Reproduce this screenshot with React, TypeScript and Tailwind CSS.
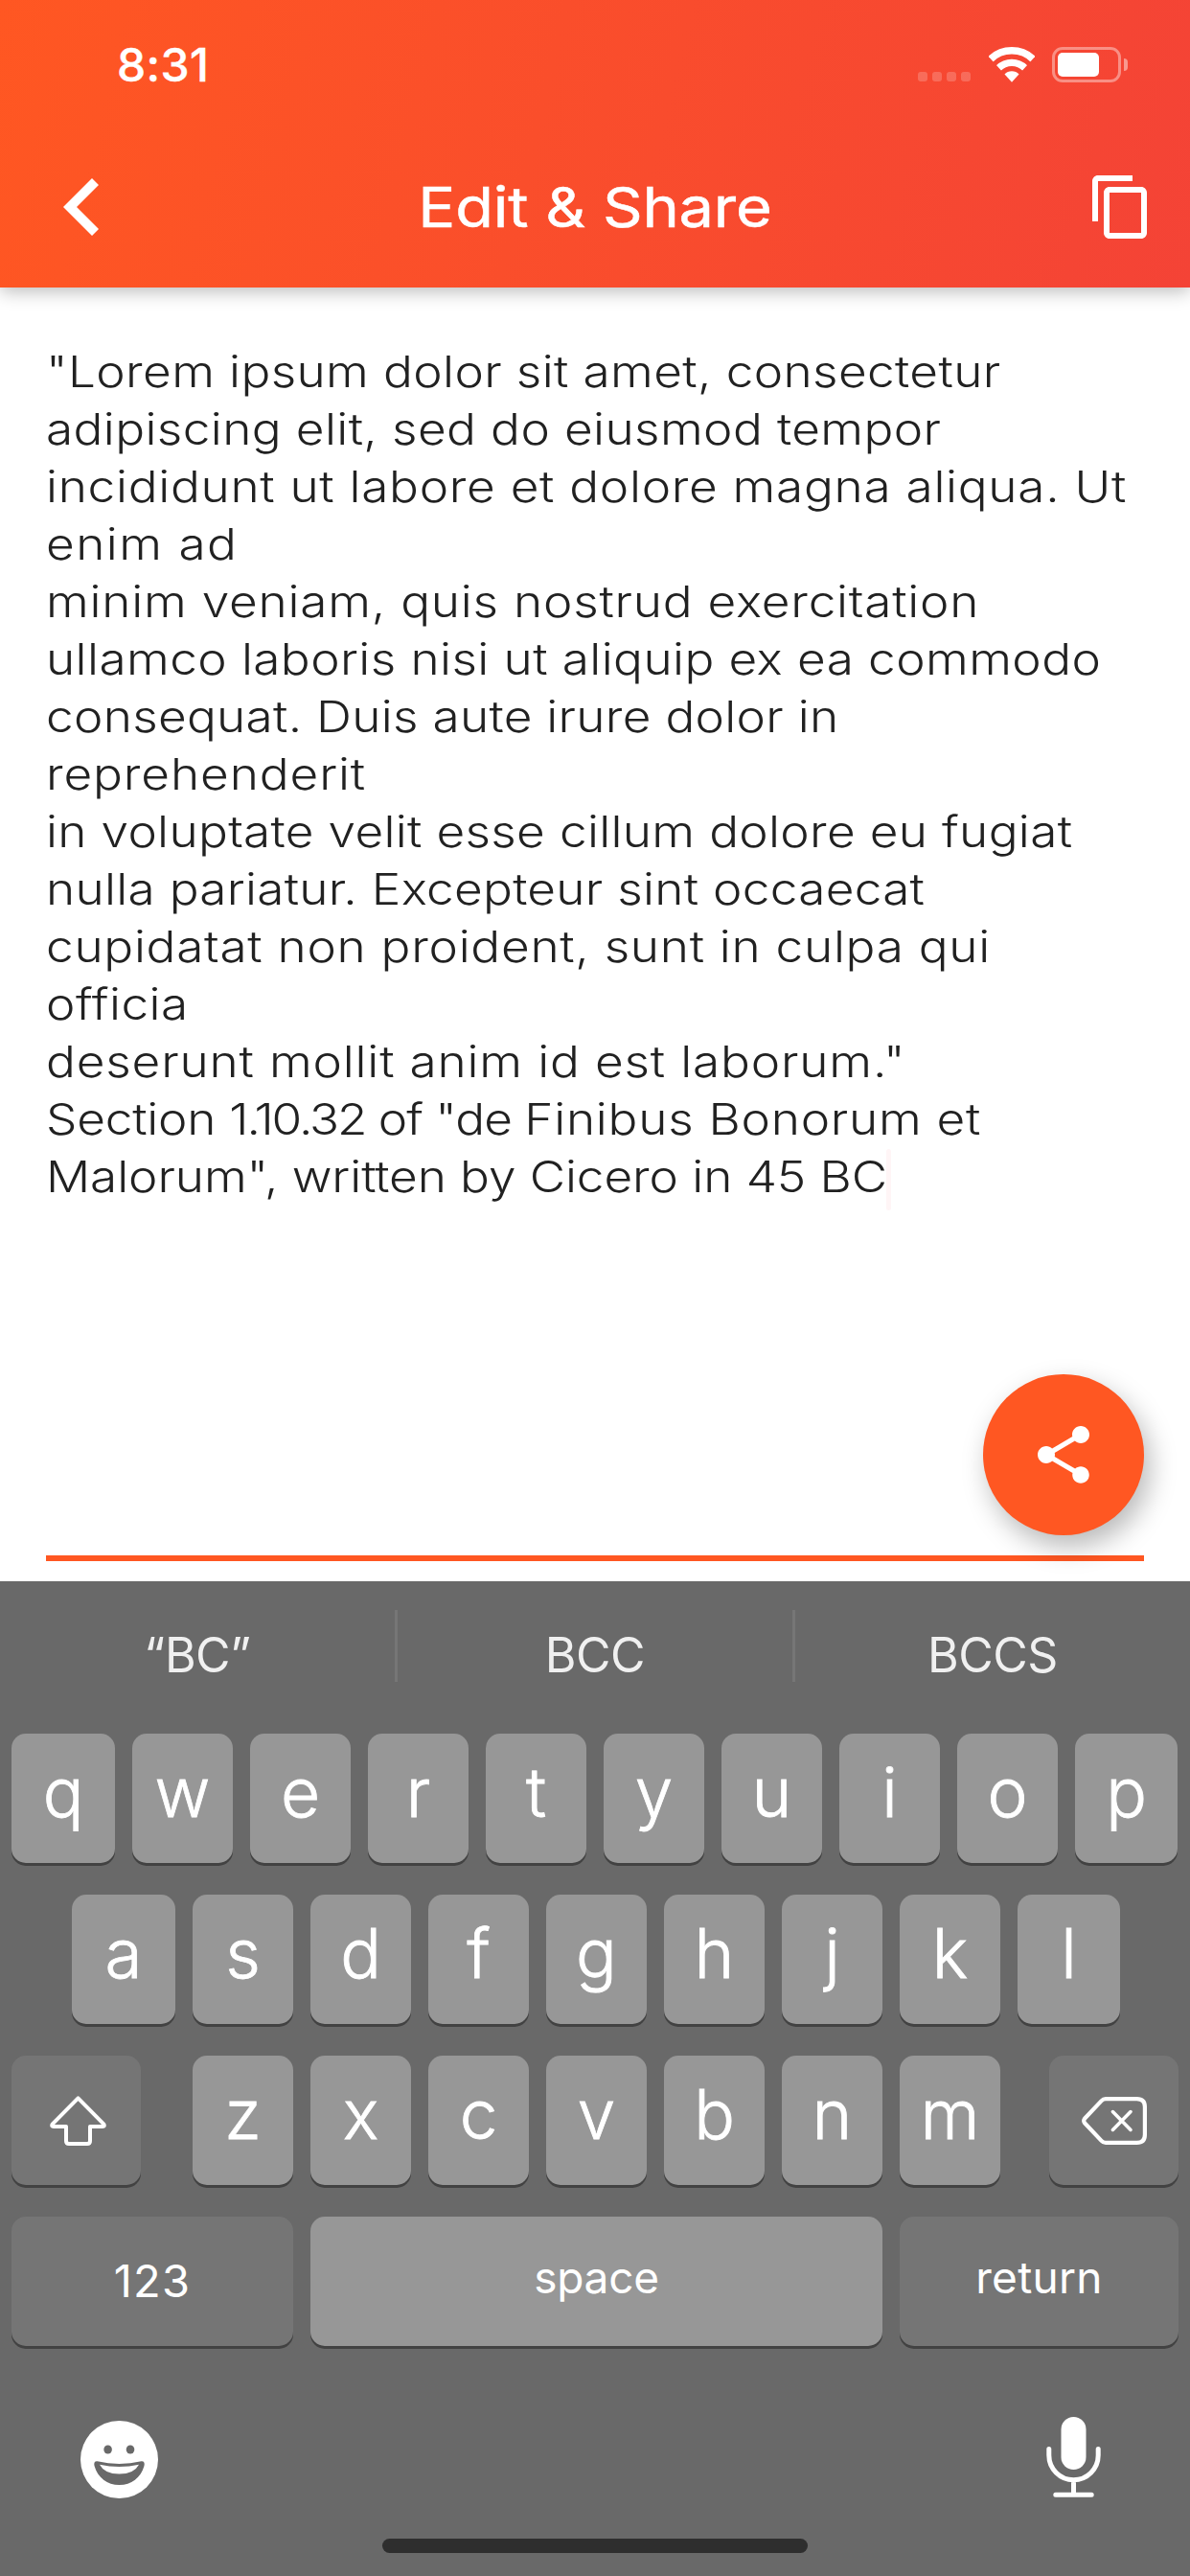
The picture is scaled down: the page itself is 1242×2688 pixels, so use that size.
import type { ReactNode } from "react";

const LINES: { text: ReactNode; tracking: string }[] = [
  { text: '"Lorem ipsum dolor sit amet, consectetur', tracking: "tracking-[0.33px]" },
  { text: "adipiscing elit, sed do eiusmod tempor", tracking: "tracking-[0.34px]" },
  { text: "incididunt ut labore et dolore magna aliqua. Ut", tracking: "tracking-[0.62px]" },
  { text: "enim ad", tracking: "tracking-[1.28px]" },
  { text: "minim veniam, quis nostrud exercitation", tracking: "tracking-[0.68px]" },
  { text: "ullamco laboris nisi ut aliquip ex ea commodo", tracking: "tracking-[0.36px]" },
  { text: "consequat. Duis aute irure dolor in", tracking: "tracking-[0.25px]" },
  { text: "reprehenderit", tracking: "tracking-[0.78px]" },
  { text: "in voluptate velit esse cillum dolore eu fugiat", tracking: "tracking-[0.28px]" },
  { text: "nulla pariatur. Excepteur sint occaecat", tracking: "tracking-[0.25px]" },
  { text: "cupidatat non proident, sunt in culpa qui", tracking: "tracking-[0.63px]" },
  { text: "officia", tracking: "tracking-[0.47px]" },
  { text: 'deserunt mollit anim id est laborum."', tracking: "tracking-[0.73px]" },
  {
    text: (
      <>
        Section <span className="tracking-[-1.8px]">1.10.32</span>
        <span className="tracking-[-0.9px]"> of "de </span>
        <span className="tracking-[0.65px]">Finibus Bonorum et</span>
      </>
    ),
    tracking: "tracking-[-0.2px]",
  },
  { text: 'Malorum", written by Cicero in 45 BC', tracking: "tracking-[-0.07px]" },
];

const KEY =
  "flex h-[135px] shrink-0 items-center justify-center rounded-[15px] shadow-[0_3px_0_#424242]";
const LIGHT = "bg-[#979797]";
const DARK = "bg-[#757575]";

function LetterKey({ char, width = "w-[105px]" }: { char: string; width?: string }) {
  return (
    <div
      className={`${KEY} ${LIGHT} ${width} pb-[12px] text-[71px] leading-none font-light [-webkit-text-stroke:0.8px_white]`}
    >
      {char}
    </div>
  );
}

function WifiIcon() {
  return (
    <svg width="48" height="37" viewBox="0 0 48 37" fill="none">
      <clipPath id="wifi-wedge">
        <path d="M24 36.8L-12 -3H60Z" />
      </clipPath>
      <g clipPath="url(#wifi-wedge)">
        <circle cx="24" cy="36" r="10.7" fill="white" />
        <circle cx="24" cy="36" r="19.6" stroke="white" strokeWidth="7.2" />
        <circle cx="24" cy="36" r="32.2" stroke="white" strokeWidth="7.6" />
      </g>
    </svg>
  );
}

function StatusBar() {
  return (
    <div className="flex h-[135px] items-center justify-between pr-[65px] pl-[122px]">
      <span className="text-[48px] leading-none font-medium tracking-[0.4px] [-webkit-text-stroke:0.4px_white]">8:31</span>
      <div className="flex items-center">
        <div className="mt-[25px] flex gap-[5px]">
          {[0, 1, 2, 3].map((dot) => (
            <span key={dot} className="size-[10px] rounded-[3px] bg-white/20" />
          ))}
        </div>
        <div className="ml-[19px]">
          <WifiIcon />
        </div>
        <div className="ml-[18px] h-[37px] w-[72px] rounded-[11px] border-[3px] border-white/40 p-[3px]">
          <div className="h-[25px] w-[43px] rounded-[5px] bg-white" />
        </div>
        <div className="ml-[3px] h-[13px] w-[4px] rounded-r-full bg-white/45" />
      </div>
    </div>
  );
}

function NavBar() {
  return (
    <div className="flex h-[165px] items-center pb-[3px]">
      <div className="flex w-[108px] justify-end pr-[5px]">
        <svg width="37" height="60" viewBox="0 0 37 60" fill="white">
          <path d="M0 30L30 0L37 7L14 30L37 53L30 60Z" />
        </svg>
      </div>
      <h1 className="flex-1 scale-x-[1.12] text-center text-[58px] leading-none font-normal tracking-[-0.2px] [-webkit-text-stroke:0.5px_white]">
        Edit &amp; Share
      </h1>
      <div className="w-[108px]">
        <svg width="72" height="72" viewBox="0 0 24 24" fill="white">
          <path d="M16 1H4c-1.1 0-2 .9-2 2v14h2V3h12V1zm3 4H8c-1.1 0-2 .9-2 2v14c0 1.1.9 2 2 2h11c1.1 0 2-.9 2-2V7c0-1.1-.9-2-2-2zm0 16H8V7h11v14z" />
        </svg>
      </div>
    </div>
  );
}

function ShareButton() {
  return (
    <button className="absolute top-[1134px] right-[48px] flex size-[168px] items-center justify-center rounded-full bg-[#ff5722] shadow-[6px_12px_28px_rgba(0,0,0,0.28)]">
      <svg width="72" height="72" viewBox="0 0 24 24" fill="white">
        <path d="M18 16.08c-.76 0-1.44.3-1.96.77L8.91 12.7c.05-.23.09-.46.09-.7s-.04-.47-.09-.7l7.05-4.11c.54.5 1.25.81 2.04.81 1.66 0 3-1.34 3-3s-1.34-3-3-3-3 1.34-3 3c0 .24.04.47.09.7L8.04 9.81C7.5 9.31 6.79 9 6 9c-1.66 0-3 1.34-3 3s1.34 3 3 3c.79 0 1.5-.31 2.04-.81l7.12 4.16c-.05.21-.08.43-.08.65 0 1.61 1.31 2.92 2.92 2.92s2.92-1.31 2.92-2.92-1.31-2.92-2.92-2.92z" />
      </svg>
    </button>
  );
}

function Editor() {
  return (
    <main className="relative flex h-[1350px] flex-col px-[48px] pt-[58px]">
      <div className="w-[1000px] origin-left scale-x-[1.14] text-[45px] leading-[60px] font-light text-[#212121]">
        {LINES.map(({ text, tracking }, i) => (
          <p key={i} className={`whitespace-nowrap ${tracking}`}>
            {text}
          </p>
        ))}
      </div>
      <div className="mt-auto mb-[21px] h-[6px] bg-[#ff5722]" />
      <div className="absolute top-[899px] left-[925px] h-[64px] w-[5px] rounded-full bg-[#fff5f6]" />
      <ShareButton />
    </main>
  );
}

function Suggestions() {
  const cell = "flex flex-1 items-center justify-center pt-[19px]";
  return (
    <div className="flex h-[105px] pt-[30px] text-[50px] leading-none tracking-[-0.5px] text-[#f0f0f0]">
      <div className={cell}>“BC”</div>
      <div className="w-[3px] bg-[#767676]" />
      <div className={cell}>BCC</div>
      <div className="w-[3px] bg-[#767676]" />
      <div className={cell}>BCCS</div>
    </div>
  );
}

function Keyboard() {
  return (
    <section className="flex h-[1038px] flex-col bg-[#696969] text-white">
      <Suggestions />
      <div className="mt-[54px] flex flex-col gap-[33px]">
        <div className="flex gap-[18px] pl-[12px]">
          <LetterKey char="q" width="w-[108px]" />
          {[..."wertyuio"].map((c) => (
            <LetterKey key={c} char={c} />
          ))}
          <LetterKey char="p" width="w-[107px]" />
        </div>
        <div className="flex gap-[18px] pl-[75px]">
          <LetterKey char="a" width="w-[108px]" />
          {[..."sdfghjk"].map((c) => (
            <LetterKey key={c} char={c} />
          ))}
          <LetterKey char="l" width="w-[107px]" />
        </div>
        <div className="flex justify-between pr-[12px] pl-[12px]">
          <div className={`${KEY} ${DARK} w-[135px] pl-[4px]`}>
            <svg width="59" height="52" viewBox="0 0 59 52" fill="none" stroke="white" strokeWidth="4" strokeLinejoin="round">
              <path d="M29.5 2.4L2.8 29.4Q1.2 31.9 4 31.9H17V47q0 3 3 3H39q3 0 3-3V31.9H55q2.8 0 1.2-2.5Z" />
            </svg>
          </div>
          <div className="flex gap-[18px] pl-[3px]">
            {[..."zxcvbnm"].map((c) => (
              <LetterKey key={c} char={c} />
            ))}
          </div>
          <div className={`${KEY} ${DARK} w-[135px]`}>
            <svg width="68" height="50" viewBox="0 0 68 50" fill="none" stroke="white" strokeWidth="4.2" strokeLinejoin="round" strokeLinecap="round">
              <path d="M25 2.1H57.5q8.4 0 8.4 8.4V39.5q0 8.4-8.4 8.4H25q-2.6 0-4.4-2L3 27.2q-1.6-2.2 0-4.4L20.6 4.1q1.8-2 4.4-2Z" />
              <path d="M32.4 15.6L51 34.4M51 15.6L32.4 34.4" strokeWidth="3.6" />
            </svg>
          </div>
        </div>
        <div className="flex gap-[18px] pl-[12px] leading-none">
          <div className={`${KEY} ${DARK} w-[294px] pb-[2px] text-[47px] tracking-[1.2px]`}>123</div>
          <div className={`${KEY} ${LIGHT} w-[597px] pb-[9px] text-[46px] tracking-[-0.3px]`}>space</div>
          <div className={`${KEY} ${DARK} w-[291px] pb-[9px] text-[46px] tracking-[0.3px]`}>return</div>
        </div>
      </div>
      <div className="mt-[74px] flex items-start justify-between pr-[93px] pl-[84px]">
        <svg className="mt-[4px]" width="81" height="81" viewBox="0 0 81 81">
          <circle cx="40.5" cy="40.5" r="40.5" fill="white" />
          <ellipse cx="28.6" cy="30" rx="4.3" ry="4.6" fill="#696969" />
          <ellipse cx="52" cy="30" rx="4.3" ry="4.6" fill="#696969" />
          <path
            d="M17.5 42.3Q40.5 47.6 63.5 42.3Q67.6 42 66.5 47C63 59.5 53 67 40.5 67C28 67 18 59.5 14.5 47Q13.4 42 17.5 42.3Z"
            fill="#696969"
          />
          <path d="M20 45.8Q40.5 50.2 61 45.8Q56 55.6 40.5 55.6Q25 55.6 20 45.8Z" fill="white" />
        </svg>
        <svg width="57" height="84" viewBox="0 0 57 84" fill="none" stroke="white" strokeWidth="5" strokeLinecap="round">
          <rect x="15.5" y="0" width="26" height="55" rx="13" fill="white" stroke="none" />
          <path d="M2.8 33.5V40a25.7 25.7 0 0 0 51.4 0V33.5M28.5 66V80M9.8 81.3H47.2" />
        </svg>
      </div>
      <div className="mx-auto mt-auto mb-[24px] h-[15px] w-[444px] rounded-full bg-[#2e2e2e]" />
    </section>
  );
}

export default function App() {
  return (
    <div className="flex h-[2688px] w-[1242px] flex-col overflow-hidden bg-white font-['Inter',sans-serif]">
      <header className="relative h-[300px] bg-[linear-gradient(103.6deg,#ff5722,#f44336)] text-white shadow-[0_4px_18px_rgba(0,0,0,0.27)]">
        <StatusBar />
        <NavBar />
      </header>
      <Editor />
      <Keyboard />
    </div>
  );
}
